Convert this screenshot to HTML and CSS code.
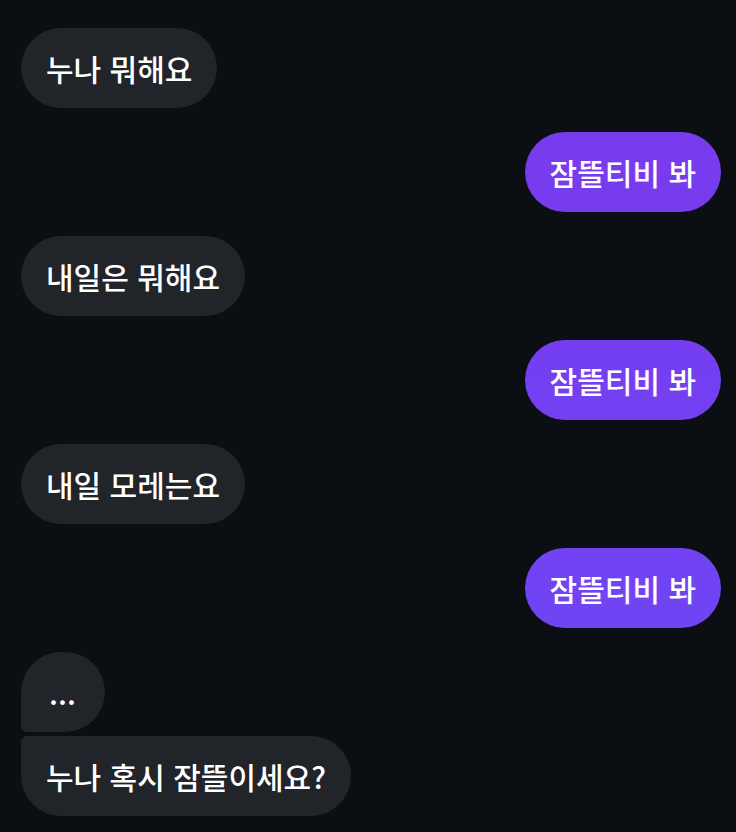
FILE: index.html
```html
<!DOCTYPE html>
<html lang="ko">
<head>
    <meta charset="UTF-8">
    <meta name="viewport" content="width=device-width, initial-scale=1.0">
    <title>채팅</title>
    <link rel="stylesheet" href="styles.css">
</head>
<body>
    <div class="chat">
        <div class="row left">
            <div class="bubble them">누나 뭐해요</div>
        </div>
        <div class="row right">
            <div class="bubble me">잠뜰티비 봐</div>
        </div>
        <div class="row left">
            <div class="bubble them">내일은 뭐해요</div>
        </div>
        <div class="row right">
            <div class="bubble me">잠뜰티비 봐</div>
        </div>
        <div class="row left">
            <div class="bubble them">내일 모레는요</div>
        </div>
        <div class="row right">
            <div class="bubble me">잠뜰티비 봐</div>
        </div>

        <!-- 연속 메시지 묶음 -->
        <div class="group">
            <div class="row left">
                <div class="bubble them first dots">...</div>
            </div>
            <div class="row left">
                <div class="bubble them last">누나 혹시 잠뜰이세요?</div>
            </div>
        </div>
    </div>
</body>
</html>
```

FILE: styles.css
```css
body {
    margin: 0;
    padding: 0;
    background: #0b0e13;
    font-family: "Noto Sans CJK KR", "Noto Sans", sans-serif;
    color: #fff;
}

.chat {
    display: flex;
    flex-direction: column;
    gap: 24px;
    padding: 28px 15px 16px 21px;
}

.group {
    display: flex;
    flex-direction: column;
    gap: 4px;
}

.row {
    display: flex;
}

.row.left {
    justify-content: flex-start;
}

.row.right {
    justify-content: flex-end;
}

.bubble {
    font-size: 30px;
    font-weight: 500;
    line-height: 40px;
    padding: 20px 25px;
    border-radius: 40px;
    white-space: nowrap;
}

.bubble.them {
    background: #212428;
}

/* 보라색은 화면 위에서 아래로 조금씩 파랗게 */
.bubble.me {
    background: linear-gradient(180deg, #7b38ec 0%, #6c48f6 100%) fixed;
}

.bubble.first {
    border-bottom-left-radius: 6px;
}

.bubble.last {
    border-top-left-radius: 6px;
}

.bubble.dots {
    padding: 20px 29px 20px 28px;
}
```
